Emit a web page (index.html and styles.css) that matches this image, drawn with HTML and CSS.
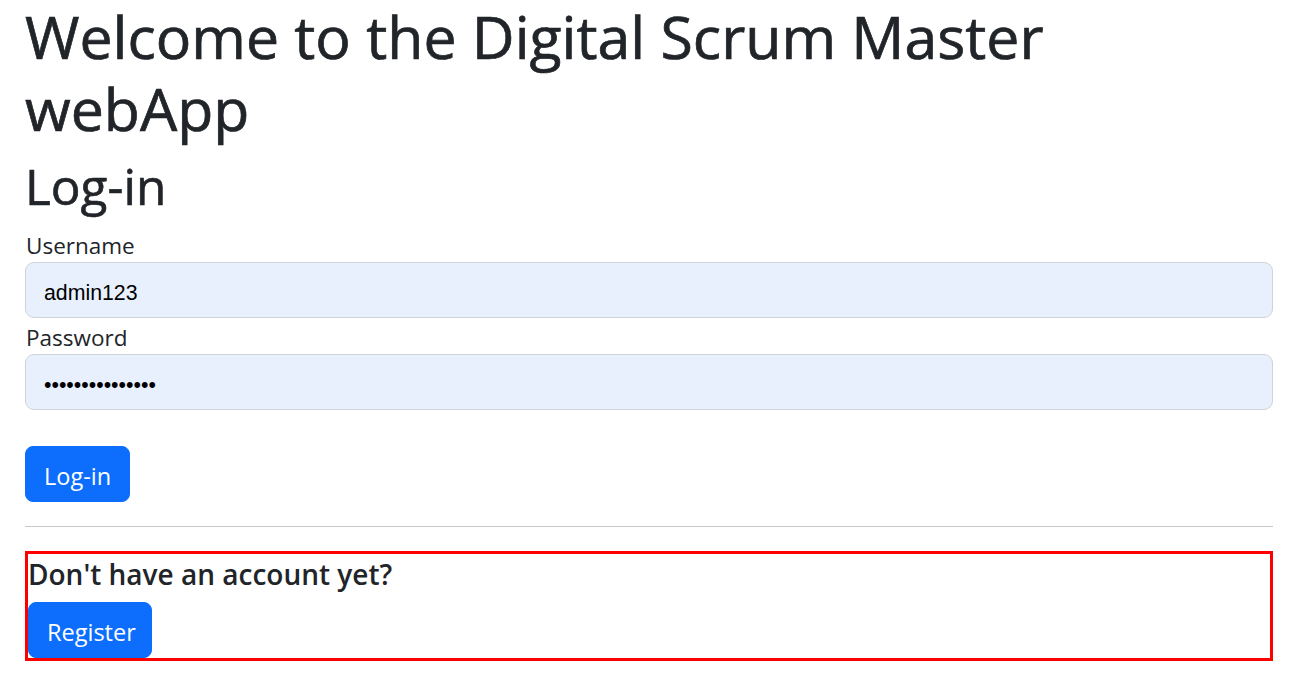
FILE: index.html
```html
<!DOCTYPE html>
<html lang="en">
<head>
<meta charset="utf-8">
<title>Digital Scrum Master</title>
<link rel="stylesheet" href="styles.css">
</head>
<body>
<main class="container">
  <h1 class="title">Welcome to the Digital Scrum Master webApp</h1>
  <h2 class="subtitle">Log-in</h2>
  <form class="login-form">
    <label class="field-label" for="username">Username</label>
    <input class="field-input field-text" id="username" type="text" value="admin123">
    <label class="field-label" for="password">Password</label>
    <input class="field-input field-pass" id="password" type="password" value="adminpassword12">
    <div class="actions">
      <button class="btn" type="button">Log-in</button>
    </div>
  </form>
  <hr class="divider">
  <section class="register-box">
    <h5 class="register-title">Don't have an account yet?</h5>
    <button class="btn btn-register" type="button">Register</button>
  </section>
</main>
</body>
</html>
```
FILE: styles.css
```css
* { box-sizing: border-box; }
html, body { margin: 0; padding: 0; background: #fff; }
body {
  font-family: "Open Sans", "Noto Sans", sans-serif;
  color: #212529;
  font-size: 24px;
  line-height: 36px;
}
.container {
  padding: 0 31px 0 25px;
}
.title {
  margin: 0 0 12px;
  font-size: 59px;
  line-height: 72px;
  font-weight: 400;
  -webkit-text-stroke: 0.7px #212529;
  max-width: 1060px;
}
.subtitle {
  margin: 0 0 12px;
  padding-top: 2px;
  height: 57.6px;
  font-size: 49.5px;
  line-height: 57.6px;
  font-weight: 400;
  -webkit-text-stroke: 0.6px #212529;
}
.login-form {
  display: flex;
  flex-direction: column;
  align-items: stretch;
}
.field-label {
  display: block;
  height: 36px;
  font-size: 22.5px;
  line-height: 36px;
  padding-top: 2px;
  padding-left: 1px;
}
.field-input {
  display: block;
  width: 100%;
  height: 56px;
  margin: 0;
  padding: 13px 18px 5px;
  border: 1px solid #ced4da;
  border-radius: 9px;
  background: #e8f0fe;
  color: #000;
  font-family: "Liberation Sans", Arial, sans-serif;
  font-size: 21.3px;
  outline: none;
}
.actions {
  margin-top: 36px;
}
.btn {
  display: inline-block;
  margin: 0;
  padding: 11px 18px 7px;
  border: 1px solid #0d6efd;
  border-radius: 8px;
  background: #0d6efd;
  color: #fff;
  font-family: "Open Sans", "Noto Sans", sans-serif;
  font-size: 23.5px;
  line-height: 36px;
  height: 56px;
  cursor: pointer;
}
.divider {
  margin: 24px 0;
  border: 0;
  border-top: 1px solid #c8c9ca;
  height: 0;
}
.register-box {
  border: 3px solid #ff0000;
  padding: 0;
}
.register-title {
  margin: 0 0 12px;
  padding-top: 2px;
  height: 36px;
  font-size: 28px;
  line-height: 36px;
  font-weight: 600;
}
.btn-register {
  display: block;
  padding: 11px 15px 7px 18px;
}
```
